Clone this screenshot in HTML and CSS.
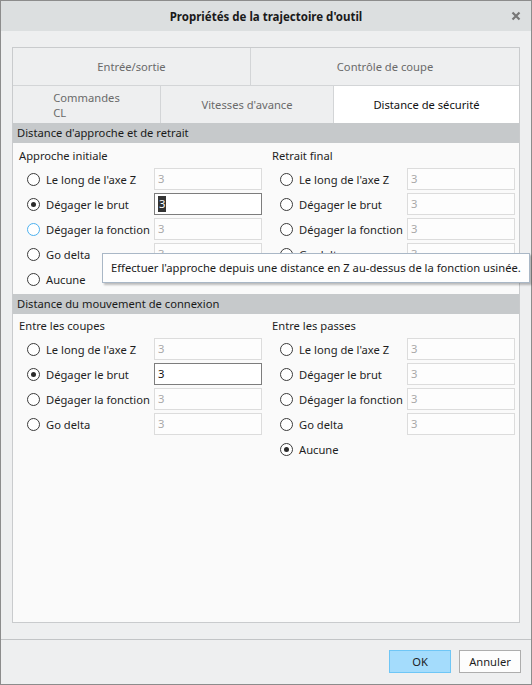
FILE: index.html
```html
<!DOCTYPE html>
<html lang="fr">
<head>
<meta charset="utf-8">
<title>Propriétés de la trajectoire d'outil</title>
<link rel="stylesheet" href="styles.css">
</head>
<body>
<div class="window">
  <div class="titlebar">
    <span class="title">Propriétés de la trajectoire d'outil</span>
    <svg class="close" width="10" height="10" viewBox="0 0 10 10"><path d="M1.5 1.5 L8.5 8.5 M8.5 1.5 L1.5 8.5" stroke="#777" stroke-width="2.2" fill="none"/></svg>
  </div>

  <div class="content">
    <div class="panel">
      <div class="tabrow top">
        <div class="tab t-io">Entrée/sortie</div>
        <div class="tab t-ctl">Contrôle de coupe</div>
      </div>
      <div class="tabrow bottom">
        <div class="tab t-cl"><span class="wrap">Commandes<br>CL</span></div>
        <div class="tab t-feed">Vitesses d'avance</div>
        <div class="tab t-safe active">Distance de sécurité</div>
      </div>

      <div class="panel-body">
        <div class="section-head">Distance d'approche et de retrait</div>
        <div class="section">
          <div class="col">
            <div class="group-title">Approche initiale</div>
            <div class="row"><span class="radio"></span><span class="label">Le long de l'axe Z</span><span class="field">3</span></div>
            <div class="row"><span class="radio checked"></span><span class="label">Dégager le brut</span><span class="field focus"><span class="sel">3</span></span></div>
            <div class="row"><span class="radio hover"></span><span class="label">Dégager la fonction</span><span class="field">3</span></div>
            <div class="row"><span class="radio"></span><span class="label">Go delta</span><span class="field">3</span></div>
            <div class="row"><span class="radio"></span><span class="label">Aucune</span></div>
          </div>
          <div class="col">
            <div class="group-title">Retrait final</div>
            <div class="row"><span class="radio"></span><span class="label">Le long de l'axe Z</span><span class="field">3</span></div>
            <div class="row"><span class="radio"></span><span class="label">Dégager le brut</span><span class="field">3</span></div>
            <div class="row"><span class="radio"></span><span class="label">Dégager la fonction</span><span class="field">3</span></div>
            <div class="row"><span class="radio"></span><span class="label">Go delta</span><span class="field">3</span></div>
          </div>
        </div>

        <div class="section-head">Distance du mouvement de connexion</div>
        <div class="section second">
          <div class="col">
            <div class="group-title">Entre les coupes</div>
            <div class="row"><span class="radio"></span><span class="label">Le long de l'axe Z</span><span class="field">3</span></div>
            <div class="row"><span class="radio checked"></span><span class="label">Dégager le brut</span><span class="field active">3</span></div>
            <div class="row"><span class="radio"></span><span class="label">Dégager la fonction</span><span class="field">3</span></div>
            <div class="row"><span class="radio"></span><span class="label">Go delta</span><span class="field">3</span></div>
          </div>
          <div class="col">
            <div class="group-title">Entre les passes</div>
            <div class="row"><span class="radio"></span><span class="label">Le long de l'axe Z</span><span class="field">3</span></div>
            <div class="row"><span class="radio"></span><span class="label">Dégager le brut</span><span class="field">3</span></div>
            <div class="row"><span class="radio"></span><span class="label">Dégager la fonction</span><span class="field">3</span></div>
            <div class="row"><span class="radio"></span><span class="label">Go delta</span><span class="field">3</span></div>
            <div class="row"><span class="radio checked"></span><span class="label">Aucune</span></div>
          </div>
        </div>
      </div>
    </div>
  </div>

  <div class="footer">
    <button class="btn primary">OK</button>
    <button class="btn">Annuler</button>
  </div>

  <div class="tooltip">Effectuer l'approche depuis une distance en Z au-dessus de la fonction usinée.</div>
</div>
</body>
</html>
```
FILE: styles.css
```css
* { box-sizing: border-box; }

html, body {
  margin: 0;
  padding: 0;
}

body {
  font-family: "Noto Sans", "Open Sans", sans-serif;
  font-size: 11.2px;
  color: #1e1e1e;
  background: #eeeff0;
}

.window {
  position: relative;
  width: 532px;
  height: 685px;
  border: 1px solid #8c8c8c;
  background: #eeeff0;
  display: flex;
  flex-direction: column;
}

/* title bar */
.titlebar {
  position: relative;
  height: 30px;
  background: #dcdfe0;
  display: flex;
  align-items: center;
  justify-content: center;
}

.title {
  font-weight: bold;
  font-size: 11.5px;
  color: #1a1a1a;
}

.close {
  position: absolute;
  right: 10px;
  top: 10px;
}

/* tabbed panel */
.content {
  padding: 16px 11px 0 11px;
  height: 592px;
}

.panel {
  height: 576px;
  border: 1px solid #c9cbcd;
  background: #fafafa;
  display: flex;
  flex-direction: column;
}

.tabrow {
  display: flex;
  height: 38px;
  background: #eeeff0;
  border-bottom: 1px solid #d3d5d7;
}

.tabrow.bottom {
  height: 37px;
  border-bottom: none;
}

.tab {
  display: flex;
  align-items: center;
  justify-content: center;
  color: #6a6a6a;
  border-right: 1px solid #d3d5d7;
}

.tab:last-child { border-right: none; }

.t-io { width: 238px; }
.t-ctl { flex: 1; }
.t-cl { width: 148px; }
.t-feed { width: 173px; }
.t-safe { flex: 1; }

.tab .wrap {
  display: inline-block;
  text-align: left;
  line-height: 15px;
}

.tab.active {
  background: #ffffff;
  color: #111;
}

/* sections */
.panel-body {
  flex: 1;
  background: #fafafa;
}

.section-head {
  height: 20px;
  line-height: 20px;
  background: #c6c9cb;
  padding-left: 4px;
  color: #1a1a1a;
}

.section {
  display: grid;
  grid-template-columns: 253px 1fr;
  padding: 5px 0 4px 6px;
}

.section.second {
  padding-top: 4px;
}

.group-title {
  height: 16px;
  line-height: 16px;
  margin-bottom: 4px;
}

.row {
  display: flex;
  align-items: center;
  height: 22px;
  margin-bottom: 3px;
  padding-left: 8px;
}

.row:last-child { margin-bottom: 0; }

.radio {
  width: 13px;
  height: 13px;
  border: 1px solid #3a3a3a;
  border-radius: 50%;
  background: #fff;
  margin-right: 6px;
  display: flex;
  align-items: center;
  justify-content: center;
  flex: none;
}

.radio.checked::after {
  content: "";
  width: 5px;
  height: 5px;
  border-radius: 50%;
  background: #2a2a2a;
}

.radio.hover {
  border-color: #4db1ef;
}

.label {
  width: 108px;
  white-space: nowrap;
}

.field {
  width: 108px;
  height: 22px;
  border: 1px solid #dcdcdc;
  background: #fdfdfd;
  color: #a8a8a8;
  padding-left: 3px;
  line-height: 19px;
}

.field.focus,
.field.active {
  border-color: #7d7d7d;
  background: #fff;
  color: #111;
}

.field .sel {
  background: #333;
  color: #fff;
  display: inline-block;
  line-height: 16px;
  padding: 0 1px;
  margin-top: 1px;
}

/* footer */
.footer {
  margin-top: 16px;
  border-top: 1px solid #c2c4c6;
  padding: 10px 10px 0 0;
  display: flex;
  justify-content: flex-end;
  gap: 8px;
}

.btn {
  width: 62px;
  height: 23px;
  font-family: inherit;
  font-size: 11.2px;
  color: #1e1e1e;
  background: #fdfdfd;
  border: 1px solid #adadad;
  padding: 0;
}

.btn.primary {
  background: #a4dcfc;
  border-color: #6ec6f6;
}

/* tooltip over the first section */
.tooltip {
  position: absolute;
  left: 101px;
  top: 252px;
  width: 428px;
  height: 30px;
  background: #fefefe;
  border: 1px solid #a9b7c6;
  box-shadow: 2px 2px 2px rgba(0, 0, 0, 0.25);
  padding-left: 8px;
  line-height: 28px;
  white-space: nowrap;
  color: #1a1a1a;
}
```
